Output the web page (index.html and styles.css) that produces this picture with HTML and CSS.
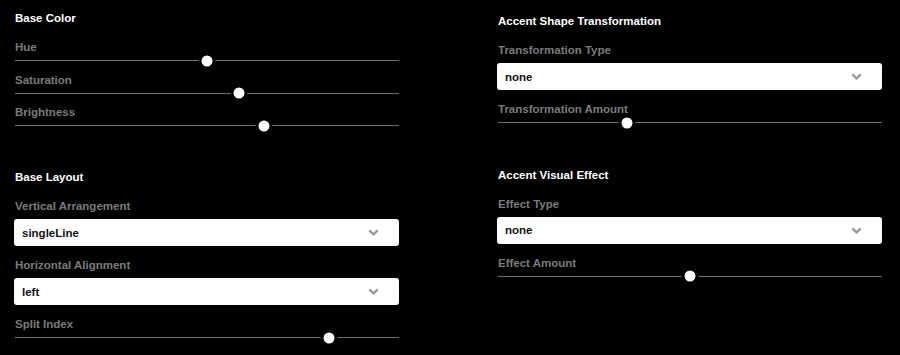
FILE: index.html
```html
<!DOCTYPE html>
<html lang="en">
<head>
<meta charset="utf-8">
<title>Controls</title>
<link rel="stylesheet" href="styles.css">
</head>
<body>
<div class="panel">
  <div class="col col-left">
    <section class="section">
      <div class="section-title">Base Color</div>
      <div class="field field-slider">
        <div class="field-label">Hue</div>
        <div class="slider"><div class="track"></div><div class="thumb" style="left:50%"></div></div>
      </div>
      <div class="field field-slider">
        <div class="field-label">Saturation</div>
        <div class="slider"><div class="track"></div><div class="thumb" style="left:58.4%"></div></div>
      </div>
      <div class="field field-slider">
        <div class="field-label">Brightness</div>
        <div class="slider"><div class="track"></div><div class="thumb" style="left:64.9%"></div></div>
      </div>
    </section>
    <section class="section">
      <div class="section-title">Base Layout</div>
      <div class="field field-select">
        <div class="field-label">Vertical Arrangement</div>
        <div class="select"><span>singleLine</span><svg class="chev" width="11" height="7" viewBox="0 0 11 7"><path d="M1.3 1.3 L5.5 5.3 L9.7 1.3" fill="none" stroke="#9a9a9a" stroke-width="2.4"/></svg></div>
      </div>
      <div class="field field-select">
        <div class="field-label">Horizontal Alignment</div>
        <div class="select"><span>left</span><svg class="chev" width="11" height="7" viewBox="0 0 11 7"><path d="M1.3 1.3 L5.5 5.3 L9.7 1.3" fill="none" stroke="#9a9a9a" stroke-width="2.4"/></svg></div>
      </div>
      <div class="field field-slider">
        <div class="field-label">Split Index</div>
        <div class="slider"><div class="track"></div><div class="thumb" style="left:81.8%"></div></div>
      </div>
    </section>
  </div>
  <div class="col col-right">
    <section class="section">
      <div class="section-title">Accent Shape Transformation</div>
      <div class="field field-select">
        <div class="field-label">Transformation Type</div>
        <div class="select"><span>none</span><svg class="chev" width="11" height="7" viewBox="0 0 11 7"><path d="M1.3 1.3 L5.5 5.3 L9.7 1.3" fill="none" stroke="#9a9a9a" stroke-width="2.4"/></svg></div>
      </div>
      <div class="field field-slider">
        <div class="field-label">Transformation Amount</div>
        <div class="slider"><div class="track"></div><div class="thumb" style="left:33.6%"></div></div>
      </div>
    </section>
    <section class="section">
      <div class="section-title">Accent Visual Effect</div>
      <div class="field field-select">
        <div class="field-label">Effect Type</div>
        <div class="select"><span>none</span><svg class="chev" width="11" height="7" viewBox="0 0 11 7"><path d="M1.3 1.3 L5.5 5.3 L9.7 1.3" fill="none" stroke="#9a9a9a" stroke-width="2.4"/></svg></div>
      </div>
      <div class="field field-slider">
        <div class="field-label">Effect Amount</div>
        <div class="slider"><div class="track"></div><div class="thumb" style="left:50%"></div></div>
      </div>
    </section>
  </div>
</div>
</body>
</html>
```

FILE: styles.css
```css
* { box-sizing: border-box; }
html, body {
  margin: 0;
  padding: 0;
  background: #000;
}
body {
  font-family: "Liberation Sans", Arial, sans-serif;
  font-weight: bold;
  font-size: 11.5px;
  overflow: hidden;
}
.panel {
  display: grid;
  grid-template-columns: 385px 385px;
  column-gap: 98px;
  padding-left: 14px;
  width: 900px;
  height: 355px;
  align-items: start;
}
.col {
  display: flex;
  flex-direction: column;
}
.col-left {
  padding-top: 11px;
  gap: 39px;
}
.col-right {
  padding-top: 14px;
  gap: 39.5px;
}
.section {
  display: flex;
  flex-direction: column;
}
.section-title {
  color: #fff;
  line-height: 14px;
  margin: 0 0 15px 1px;
}
.field-label {
  color: #7b7b7b;
  line-height: 14px;
  padding-left: 1px;
}
.field-select { margin-bottom: 12px; }
.field-select .field-label { margin-bottom: 6px; }
.field-slider { margin-bottom: 6.5px; }
.field:last-child { margin-bottom: 0; }
.select {
  height: 27px;
  background: #fff;
  border-radius: 3px;
  display: flex;
  align-items: center;
  justify-content: space-between;
  padding: 0 20px 0 8px;
  color: #111;
}
.chev { display: block; }
.slider {
  position: relative;
  height: 12px;
  margin-left: 1px;
}
.track {
  position: absolute;
  left: 0;
  right: 0;
  top: 6px;
  height: 1px;
  background: #707070;
}
.thumb {
  position: absolute;
  top: 6.5px;
  width: 17px;
  height: 17px;
  border-radius: 50%;
  background: #fff;
  border: 3px solid #000;
  transform: translate(-50%, -50%);
}
```
